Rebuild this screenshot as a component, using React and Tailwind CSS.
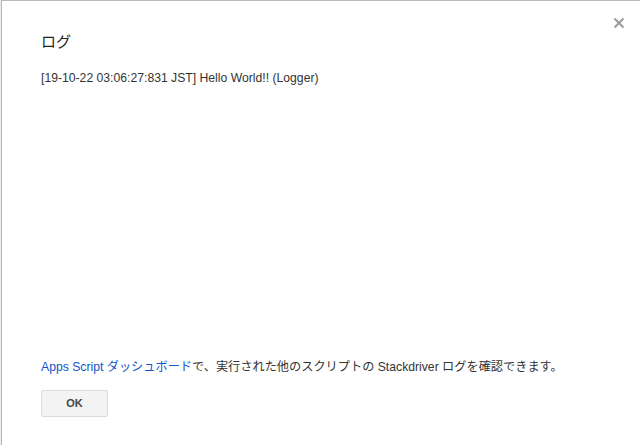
import React from 'react';

function CloseIcon() {
  return (
    <svg width="12" height="12" viewBox="0 0 12 12" className="block">
      <path d="M1.5 1.5 L10.5 10.5 M10.5 1.5 L1.5 10.5" stroke="#9e9e9e" strokeWidth="2.2" strokeLinecap="butt" />
    </svg>
  );
}

export default function App() {
  return (
    <div className="flex h-[445px] w-[640px] overflow-hidden bg-white font-['Liberation_Sans','Noto_Sans_CJK_JP',sans-serif]">
      <div className="w-px shrink-0 bg-[#ececec]" />
      <div className="relative flex flex-1 flex-col border-l border-t border-[#b9b9b9] bg-white pl-[39px] pr-10 pt-[31px] pb-[28px]">
        <button className="absolute right-[15px] top-[16px] p-0">
          <CloseIcon />
        </button>
        <h1 className="text-[15px] leading-[20px] font-normal text-[#222]">ログ</h1>
        <div className="mt-[18px] text-[12.2px] leading-[16px] text-[#333]">
          [19-10-22 03:06:27:831 JST] Hello World!! (Logger)
        </div>
        <div className="flex-1" />
        <p className="text-[12.2px] leading-[16px] text-[#333]">
          <a className="text-[#15c]">Apps Script ダッシュボード</a>で、実行された他のスクリプトの Stackdriver ログを確認できます。
        </p>
        <div className="mt-[15px]">
          <button className="h-[27px] w-[67px] rounded-[2px] border border-[#dcdcdc] bg-[#f3f3f3] text-[11px] font-bold text-[#444]">
            OK
          </button>
        </div>
      </div>
    </div>
  );
}
